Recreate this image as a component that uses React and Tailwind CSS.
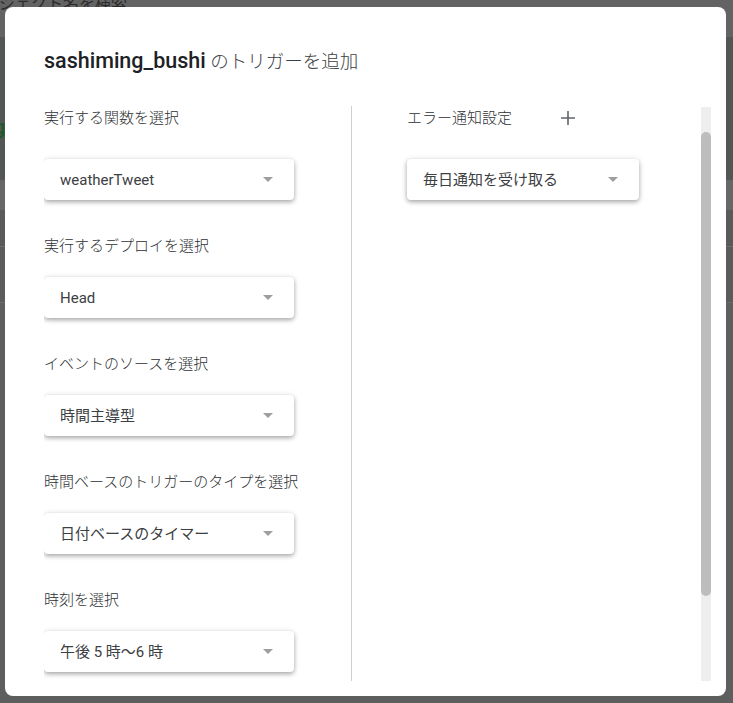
import React from 'react';

const SECTIONS = [
  { label: '実行するデプロイを選択', value: 'Head' },
  { label: 'イベントのソースを選択', value: '時間主導型' },
  { label: '時間ベースのトリガーのタイプを選択', value: '日付ベースのタイマー' },
  { label: '時刻を選択', value: '午後 5 時～6 時' },
];

const Arrow = () => (
  <svg width="10" height="5" viewBox="0 0 10 5" className="shrink-0">
    <path d="M0 0h10L5 5z" fill="#9e9e9e" />
  </svg>
);

const Select = ({ value, className }) => (
  <div
    className={`flex h-[41px] items-center justify-between rounded-[4px] bg-white pl-4 pr-[21px] shadow-[0_2px_4px_rgba(0,0,0,0.28),0_1px_7px_rgba(0,0,0,0.12)] ${className}`}
  >
    <span className="text-[15px] leading-5 text-[#3c4043]">{value}</span>
    <Arrow />
  </div>
);

const Label = ({ children }) => (
  <div className="text-[15px] leading-5 font-light text-[#2d3033]">{children}</div>
);

export default function App() {
  return (
    <div className="relative h-[703px] w-[733px] overflow-hidden bg-[#5e5e5e] font-[Roboto,'Noto_Sans_CJK_JP',sans-serif]">
      {/* page behind the dialog */}
      <div className="flex flex-col">
        <div className="h-[37px] bg-[#636363]">
          <div className="-mt-[6px] -ml-[33px] text-[16px] leading-5 text-[#2b2b2b]">
            プロジェクト名を検索
          </div>
        </div>
        <div className="h-[143px] bg-[#535753]">
          <div className="mt-[78px] -ml-[6px] text-[20px] leading-6 font-medium text-[#1d5a2c]">g</div>
        </div>
        <div className="h-[30px] bg-[#676767]" />
        <div className="h-[36px] bg-[#5a5a5a]" />
        <div className="h-px bg-[#6c6c6c]" />
        <div className="h-[55px] bg-[#5b5b5b]" />
        <div className="h-px bg-[#6a6a6a]" />
        <div className="flex-1 bg-[#5c5c5c]" />
      </div>

      {/* dialog */}
      <div className="absolute left-[5px] top-[7px] flex h-[689px] w-[721px] flex-col rounded-lg bg-white pl-[39px] pr-[15px] pt-[40px] pb-[15px]">
        <h2 className="leading-7 whitespace-nowrap">
          <span className="text-[21.5px] font-medium text-[#202124]">sashiming_bushi</span>
          <span className="text-[18.5px] font-light text-[#3c4043]"> のトリガーを追加</span>
        </h2>

        <div className="mt-[29px] flex h-[575px] overflow-hidden">
          <div className="flex w-[307px] shrink-0 flex-col">
            <div className="flex h-6 items-center">
              <Label>実行する関数を選択</Label>
            </div>
            <Select value="weatherTweet" className="mt-[29px] w-[250px]" />
            {SECTIONS.map((s) => (
              <div key={s.label} className="mt-9 flex flex-col">
                <Label>{s.label}</Label>
                <Select value={s.value} className="mt-[21px] w-[250px]" />
              </div>
            ))}
          </div>

          <div className="w-px shrink-0 bg-[#cfcfcf]" />

          <div className="flex flex-1 flex-col pl-[55px]">
            <div className="flex h-6 items-center">
              <Label>エラー通知設定</Label>
              <svg width="24" height="24" viewBox="0 0 24 24" className="ml-[44px]">
                <path d="M19 12.8h-6.2V19h-1.6v-6.2H5v-1.6h6.2V5h1.6v6.2H19z" fill="#5f6368" />
              </svg>
            </div>
            <Select value="毎日通知を受け取る" className="mt-[29px] w-[232px]" />
          </div>

          <div className="mt-px flex w-[10px] shrink-0 flex-col bg-[#eeeeee] pt-[25px]">
            <div className="h-[464px] rounded-full bg-[#bdbdbd]" />
          </div>
        </div>
      </div>
    </div>
  );
}
